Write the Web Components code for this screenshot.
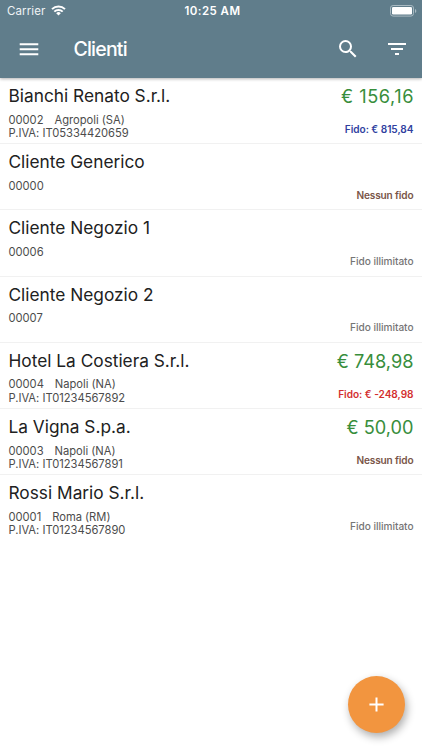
<!DOCTYPE html>
<html lang="it">
<head>
<meta charset="utf-8">
<title>Clienti</title>
<style>
html, body { margin: 0; height: 100%; background: #fff; overflow: hidden; }
body { font-family: Inter, "Liberation Sans", sans-serif; }
</style>
</head>
<body>
<clients-app></clients-app>
<script>
class StatusBar extends HTMLElement {
  constructor() {
    super();
    this.attachShadow({ mode: 'open' }).innerHTML = `
<style>
:host { display: grid; grid-template-columns: 1fr auto 1fr; align-items: center; height: 22px; padding: 0 5px 0 7px; color: #fff; font-size: 11.5px; line-height: 22px; box-sizing: border-box; }
.carrier { display: flex; align-items: center; gap: 5.5px; letter-spacing: .12px; color: #eff3f5; }
.time { font-weight: 600; letter-spacing: .45px; padding-left: 1px; }
.battery { justify-self: end; }
svg { display: block; }
.wifi { margin-top: -1px; }
</style>
<div class="carrier"><span>Carrier</span>
<svg class="wifi" width="15" height="11" viewBox="0 0 15 11" fill="none" stroke="#fff" stroke-width="2"><path d="M1 4.1a9.3 9.3 0 0 1 13 0M3.3 6.6a6 6 0 0 1 8.4 0"/><path d="M7.5 10.5L5.2 8.2a3.3 3.3 0 0 1 4.6 0z" fill="#fff" stroke="none"/></svg></div>
<span class="time">10:25 AM</span>
<svg class="battery" width="27" height="12" viewBox="0 0 27 12"><rect x=".5" y=".5" width="23" height="10.6" rx="2.6" fill="none" stroke="#a9bac2"/><rect x="2" y="2" width="20" height="7.6" rx="1.3" fill="#fff"/><path d="M25 4v4c1.8-.6 1.8-3.4 0-4z" fill="#a9bac2"/></svg>`;
  }
}
class AppToolbar extends HTMLElement {
  constructor() {
    super();
    this.attachShadow({ mode: 'open' }).innerHTML = `
<style>
:host { display: flex; align-items: center; height: 54px; padding: 0 13px 0 17px; box-sizing: border-box; color: #fff; }
h1 { flex: 1; margin: 0 0 0 32.5px; font-size: 19.5px; font-weight: 500; letter-spacing: -.8px; line-height: 24px; }
svg { display: block; width: 24px; height: 24px; fill: #fff; }
.search { margin-right: 25px; }
</style>
<svg viewBox="0 0 24 24"><path d="M2.7 18.3h18.6v-2H2.7v2zm0-5h18.6v-2H2.7v2zm0-7v2h18.6v-2H2.7z"/></svg>
<h1><slot></slot></h1>
<svg class="search" viewBox="0 0 24 24"><path d="M15.5 14h-.79l-.28-.27A6.47 6.47 0 0 0 16 9.5 6.5 6.5 0 1 0 9.5 16c1.61 0 3.09-.59 4.23-1.57l.27.28v.79l5 4.99L20.49 19l-4.99-5zm-6 0a4.5 4.5 0 1 1 0-9 4.5 4.5 0 0 1 0 9z"/></svg>
<svg viewBox="0 0 24 24"><path d="M10 18h4v-2h-4v2zM3 6v2h18V6H3zm3 7h12v-2H6v2z"/></svg>`;
  }
}
class ClientRow extends HTMLElement {
  constructor() {
    super();
    this.attachShadow({ mode: 'open' }).innerHTML = `
<style>
:host { display: flex; justify-content: space-between; height: 66.2px; padding: 0 8.5px; box-sizing: border-box; border-bottom: 1px solid #f1f1f1; white-space: nowrap; }
:host(:last-child) { border-bottom: 0; }
.name { font-size: 17.3px; line-height: 24px; padding-top: 6.1px; color: #212121; }
.info { font-size: 11.2px; line-height: 13.4px; padding-top: 5.5px; letter-spacing: -.02px; color: #4c4c4c; }
.line { display: flex; gap: 11px; }
.right { display: flex; flex-direction: column; align-items: flex-end; }
.amount { height: 24px; font-size: 18.2px; line-height: 24px; padding-top: 5.8px; color: #388e3c; }
:host([credit=open]) .amount { letter-spacing: .55px; margin-right: -.5px; }
.credit { font-size: 10.1px; line-height: 14px; padding-top: 14px; font-weight: 600; letter-spacing: -.03px; color: #757575; }
:host([credit=open]) .credit { color: #303f9f; }
:host([credit=none]) .credit { color: #795548; letter-spacing: -.15px; }
:host([credit=over]) .credit { color: #d32f2f; }
:host([credit=unlimited]) .credit { font-weight: 500; }
</style>
<div><div class="name"><slot name="name"></slot></div>
<div class="info"><div class="line"><slot name="code"></slot><slot name="city"></slot></div><slot name="vat"></slot></div></div>
<div class="right"><div class="amount"><slot name="amount"></slot></div><div class="credit"><slot></slot></div></div>`;
  }
}
class AddButton extends HTMLElement {
  constructor() {
    super();
    this.attachShadow({ mode: 'open' }).innerHTML = `
<style>
:host { position: absolute; right: 17px; bottom: 17px; width: 57px; height: 57px; border-radius: 50%; background: #f2953f; display: grid; place-items: center; box-shadow: 2px 4px 8px rgba(0,0,0,.32); }
svg { display: block; }
</style>
<svg width="15" height="15" viewBox="0 0 15 15" stroke="#fff" stroke-width="2"><path d="M7.5 .4v14.2M.4 7.5h14.2"/></svg>`;
  }
}
class ClientsApp extends HTMLElement {
  constructor() {
    super();
    const rows = [
      ['Bianchi Renato S.r.l.', '00002', 'Agropoli (SA)', 'P.IVA: IT05334420659', '€ 156,16', 'Fido: € 815,84', 'open'],
      ['Cliente Generico', '00000', '', '', '', 'Nessun fido', 'none'],
      ['Cliente Negozio 1', '00006', '', '', '', 'Fido illimitato', 'unlimited'],
      ['Cliente Negozio 2', '00007', '', '', '', 'Fido illimitato', 'unlimited'],
      ['Hotel La Costiera S.r.l.', '00004', 'Napoli (NA)', 'P.IVA: IT01234567892', '€ 748,98', 'Fido: € -248,98', 'over'],
      ['La Vigna S.p.a.', '00003', 'Napoli (NA)', 'P.IVA: IT01234567891', '€ 50,00', 'Nessun fido', 'none'],
      ['Rossi Mario S.r.l.', '00001', 'Roma (RM)', 'P.IVA: IT01234567890', '', 'Fido illimitato', 'unlimited']
    ];
    const part = (slot, text) => text ? `<span slot="${slot}">${text}</span>` : '';
    this.attachShadow({ mode: 'open' }).innerHTML = `
<style>
:host { display: block; position: relative; height: 100vh; overflow: hidden; background: #fff; }
header { position: relative; height: 78px; background: #607d8b; box-shadow: 0 1px 3px rgba(0,0,0,.3); }
</style>
<header><status-bar></status-bar><app-toolbar>Clienti</app-toolbar></header>
<main>${rows.map(([n, c, t, v, a, f, k]) => `<client-row credit="${k}">${part('name', n)}${part('code', c)}${part('city', t)}${part('vat', v)}${part('amount', a)}<span>${f}</span></client-row>`).join('')}</main>
<add-button></add-button>`;
  }
}
customElements.define('status-bar', StatusBar);
customElements.define('app-toolbar', AppToolbar);
customElements.define('client-row', ClientRow);
customElements.define('add-button', AddButton);
customElements.define('clients-app', ClientsApp);
</script>
</body>
</html>
